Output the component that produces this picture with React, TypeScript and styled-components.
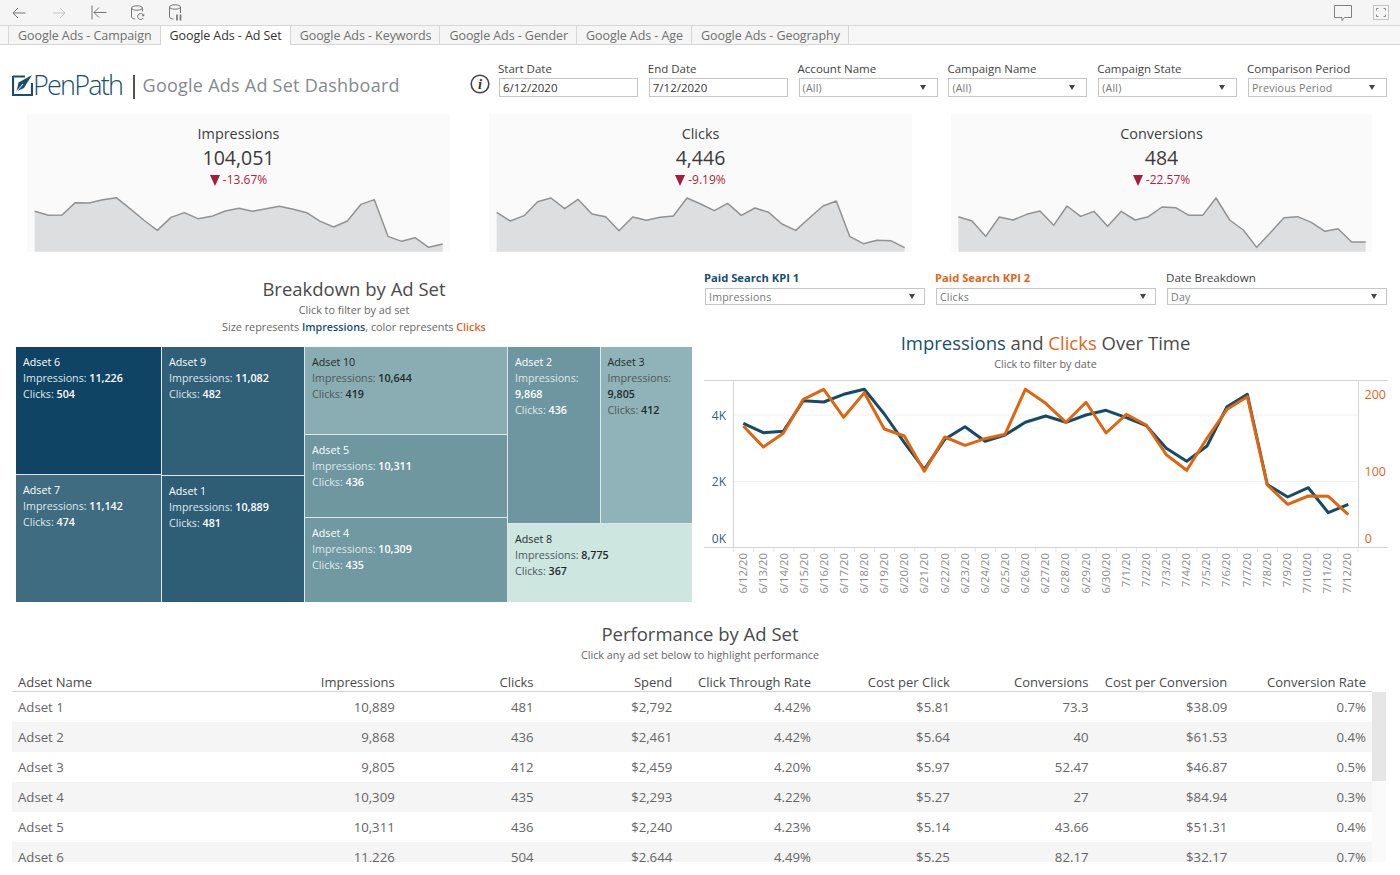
import React from "react";
import styled, { createGlobalStyle } from "styled-components";

const FONT = `"Open Sans", "Noto Sans", "Liberation Sans", sans-serif`;
const BLUE = "#17506f";
const ORANGE = "#e0651a";

const Global = createGlobalStyle`
  html, body { margin: 0; padding: 0; background: #fff; }
  body { font-family: ${FONT}; color: #444; }
  * { box-sizing: border-box; }
`;

const Page = styled.div`
  width: 1400px;
  height: 875px;
  overflow: hidden;
  background: #fff;
`;

/* ---------- toolbar ---------- */
const Toolbar = styled.div`
  height: 26px;
  background: #f5f5f5;
  border-bottom: 1px solid #d6d6d6;
  display: flex;
  align-items: center;
  padding: 0 11px 0 12px;
`;
const ToolIcon = styled.svg<{ $gap: number }>`
  display: block;
  margin-right: ${(p) => p.$gap}px;
  flex: none;
`;
const Spacer = styled.div`
  flex: 1;
`;

const TabBar = styled.div`
  height: 19px;
  background: #f7f7f7;
  border-bottom: 1px solid #d6d6d6;
  display: flex;
  padding-left: 8px;
`;
const Tab = styled.div<{ $active?: boolean }>`
  height: ${(p) => (p.$active ? 19 : 18)}px;
  line-height: 20px;
  padding: 0 8px 0 9px;
  font-size: 12.5px;
  letter-spacing: -0.07px;
  white-space: nowrap;
  color: ${(p) => (p.$active ? "#333" : "#6f6f6f")};
  background: ${(p) => (p.$active ? "#fff" : "#f5f5f5")};
  border-left: 1px solid #d6d6d6;
  &:last-child {
    border-right: 1px solid #d6d6d6;
  }
`;

/* ---------- header ---------- */
const Header = styled.div`
  height: 69px;
  display: flex;
  align-items: flex-start;
`;
const Brand = styled.div`
  width: 470px;
  padding: 24px 0 0 12px;
  display: flex;
  align-items: center;
  height: 56px;
  flex: none;
`;
const LogoSvg = styled.svg`
  flex: none;
  display: block;
`;
const LogoWord = styled.span`
  font-size: 27px;
  line-height: 30px;
  font-weight: 300;
  letter-spacing: -1.8px;
  color: ${BLUE};
`;
const Divider = styled.span`
  width: 1.5px;
  height: 24px;
  background: #555;
  margin: 3px 8px 0 11px;
`;
const DashTitle = styled.span`
  font-size: 18px;
  font-weight: 400;
  letter-spacing: 0.25px;
  color: #858a8d;
  white-space: nowrap;
`;
const InfoIcon = styled.svg`
  flex: none;
  margin-top: 29px;
  display: block;
`;
const Filters = styled.div`
  display: grid;
  grid-template-columns: repeat(6, 140px);
  column-gap: 9.8px;
  padding-top: 16px;
  margin-left: 8px;
`;
const FilterLabel = styled.div`
  font-size: 11.5px;
  line-height: 16px;
  color: #444;
  white-space: nowrap;
`;
const BoxBase = styled.div`
  height: 19px;
  border: 1px solid #c6c6c6;
  background: #fff;
  margin: 1px 0 0 1px;
  display: flex;
  align-items: center;
  justify-content: space-between;
  padding: 0 11px 0 3px;
  font-size: 10.6px;
  color: #777;
  letter-spacing: 0.2px;
`;
const DateBox = styled(BoxBase)`
  color: #333;
  letter-spacing: 0;
  font-size: 11.5px;
`;
const Arrow = styled.span`
  width: 0;
  height: 0;
  border-left: 3px solid transparent;
  border-right: 3px solid transparent;
  border-top: 5px solid #444;
  flex: none;
`;

/* ---------- KPI ---------- */
const KpiRow = styled.div`
  display: grid;
  grid-template-columns: 423px 423px 421px;
  column-gap: 39px;
  padding-left: 27px;
`;
const Kpi = styled.div`
  height: 138px;
  background: #fafafa;
  display: flex;
  flex-direction: column;
  align-items: center;
  padding-top: 11px;
`;
const KpiTitle = styled.div`
  font-size: 14.4px;
  line-height: 18px;
  color: #3d3d3d;
`;
const KpiValue = styled.div`
  font-size: 19.5px;
  line-height: 26px;
  margin-top: 2px;
  color: #3a3a3a;
`;
const KpiDelta = styled.div`
  font-size: 12px;
  line-height: 16px;
  margin-top: 1px;
  color: #b0233c;
  display: flex;
  align-items: center;
  gap: 3px;
`;
const DownTri = styled.span`
  width: 0;
  height: 0;
  border-left: 5px solid transparent;
  border-right: 5px solid transparent;
  border-top: 11px solid #a81e38;
`;
const Spark = styled.svg`
  display: block;
  margin-top: auto;
  flex: none;
  align-self: flex-start;
`;

/* ---------- middle ---------- */
const Middle = styled.div`
  display: flex;
  height: 350px;
`;
const LeftCol = styled.div`
  width: 676px;
  margin-left: 16px;
  padding-top: 24px;
  flex: none;
  display: flex;
  flex-direction: column;
  align-items: center;
`;
const SectionTitle = styled.div`
  font-size: 18.5px;
  line-height: 25px;
  color: #4a4a4a;
  white-space: nowrap;
`;
const Note = styled.div`
  font-size: 10.8px;
  line-height: 17px;
  color: #666;
  white-space: nowrap;
`;
const Em = styled.span<{ $c: string }>`
  color: ${(p) => p.$c};
  font-weight: 600;
`;
const Tint = styled.span<{ $c: string }>`
  color: ${(p) => p.$c};
`;
const Treemap = styled.div`
  width: 676px;
  height: 255px;
  margin-top: 12px;
  display: flex;
  gap: 1px;
  background: #dfe7e9;
`;
const TreeCol = styled.div<{ $w: number }>`
  width: ${(p) => p.$w}px;
  flex: none;
  display: flex;
  flex-direction: column;
  gap: 1px;
`;
const TreeRow = styled.div<{ $h: number }>`
  height: ${(p) => p.$h}px;
  flex: none;
  display: flex;
  gap: 1px;
`;
const Cell = styled.div<{ $bg: string; $dark?: boolean; $h?: number }>`
  flex: ${(p) => (p.$h ? `0 0 ${p.$h}px` : "1 1 0")};
  min-width: 0;
  background: ${(p) => p.$bg};
  padding: 7px 7px 0;
  font-size: 10.7px;
  line-height: 16px;
  color: ${(p) => (p.$dark ? "#4c5b5d" : "#dfe8ea")};
`;
const CellName = styled.div<{ $dark?: boolean }>`
  font-weight: 500;
  color: ${(p) => (p.$dark ? "#1e2a2c" : "#fff")};
`;
const CellVal = styled.b<{ $dark?: boolean }>`
  font-weight: 600;
  color: ${(p) => (p.$dark ? "#1e2a2c" : "#fff")};
`;

const RightCol = styled.div`
  width: 700px;
  margin-left: 8px;
  flex: none;
  display: flex;
  flex-direction: column;
  align-items: center;
`;
const ControlRow = styled.div`
  width: 100%;
  display: grid;
  grid-template-columns: 221px 221px 221px;
  column-gap: 10px;
  padding: 18px 0 0 4px;
`;
const ControlLabel = styled.div<{ $c?: string }>`
  font-size: ${(p) => (p.$c ? 11.2 : 11.6)}px;
  line-height: 16px;
  font-weight: ${(p) => (p.$c ? 700 : 400)};
  color: ${(p) => p.$c || "#444"};
`;
const ControlBox = styled(BoxBase)`
  height: 17px;
  margin-top: 2px;
  padding-right: 9px;
`;
const ChartTitle = styled(SectionTitle)`
  margin-top: 25px;
  padding-right: 9px;
`;
const ChartNote = styled(Note)`
  padding-right: 9px;
`;
const ChartSvg = styled.svg`
  display: block;
  margin-top: 6px;
  flex: none;
`;

/* ---------- table ---------- */
const Bottom = styled.div`
  padding-top: 19px;
  display: flex;
  flex-direction: column;
  align-items: center;
`;
const TableWrap = styled.div`
  align-self: flex-start;
  margin-left: 12px;
  margin-top: 9px;
  width: 1374px;
`;
const Grid = styled.div`
  display: grid;
  grid-template-columns: 250px repeat(8, 138.75px);
  width: 1360px;
`;
const HeadRow = styled(Grid)`
  height: 20px;
  border-bottom: 1px solid #d4d4d4;
  align-items: center;
  font-size: 13px;
  color: #4a4a4a;
`;
const Cellish = styled.div<{ $left?: boolean }>`
  text-align: ${(p) => (p.$left ? "left" : "right")};
  padding: ${(p) => (p.$left ? "0 0 0 6px" : "0 6px 0 0")};
  white-space: nowrap;
`;
const TableBody = styled.div`
  height: 170px;
  display: flex;
  overflow: hidden;
`;
const Rows = styled.div`
  width: 1360px;
  flex: none;
`;
const Row = styled(Grid)<{ $alt: boolean }>`
  height: 30px;
  align-items: center;
  font-size: 13.2px;
  color: #666;
  background: ${(p) => (p.$alt ? "#f5f5f5" : "#fff")};
`;
const Track = styled.div`
  width: 14px;
  background: #fafafa;
  flex: none;
`;
const Thumb = styled.div`
  height: 89px;
  background: #e6e6e6;
`;

/* ---------- data ---------- */
const sp1: [number, number][] = [[104,306],[145,318],[186,317],[226,280],[267,281],[308,271],[349,265],[390,298],[431,332],[472,363],[513,324],[553,310],[594,328],[635,321],[676,305],[717,297],[757,306],[798,298],[838,291],[880,300],[920,310],[961,336],[1001,353],[1042,335],[1083,285],[1123,271],[1164,381],[1205,396],[1245,385],[1286,414],[1328,404]];
const sp2: [number, number][] = [[50,309],[91,335],[132,319],[173,277],[213,266],[254,298],[294,270],[336,314],[377,322],[417,364],[458,323],[499,333],[540,324],[580,320],[621,266],[662,284],[703,304],[743,282],[784,318],[825,296],[866,309],[906,344],[947,363],[988,326],[1029,290],[1069,275],[1109,381],[1150,403],[1191,393],[1232,394],[1274,415]];
const sp3: [number, number][] = [[55,322],[96,335],[137,381],[178,323],[219,332],[260,315],[300,305],[341,348],[381,290],[422,321],[462,306],[503,351],[544,306],[585,332],[625,322],[666,293],[707,295],[747,318],[788,318],[828,266],[869,332],[910,362],[950,414],[991,370],[1032,325],[1073,322],[1114,339],[1155,366],[1194,358],[1235,398],[1277,398]];

const kpis = [
  { title: "Impressions", value: "104,051", delta: "-13.67%", pts: sp1, x0: 81 },
  { title: "Clicks", value: "4,446", delta: "-9.19%", pts: sp2, x0: 27 },
  { title: "Conversions", value: "484", delta: "-22.57%", pts: sp3, x0: 33 },
];

const blueZ: [number, number][] = [[130,160],[190,188],[250,184],[310,92],[371,96],[431,73],[493,58],[553,132],[613,218],[673,298],[734,208],[795,170],[855,214],[915,195],[976,157],[1037,138],[1098,157],[1158,135],[1218,121],[1279,143],[1339,167],[1399,235],[1460,274],[1521,228],[1581,110],[1642,73],[1702,344],[1763,381],[1825,353],[1885,428],[1945,403]];
const orangeZ: [number, number][] = [[130,168],[190,231],[250,190],[310,88],[371,58],[431,142],[493,68],[553,177],[613,198],[673,304],[734,201],[795,226],[855,206],[915,193],[976,58],[1037,100],[1098,157],[1158,97],[1218,189],[1279,133],[1339,165],[1399,254],[1460,301],[1521,205],[1581,118],[1642,80],[1702,345],[1763,403],[1825,378],[1885,379],[1945,434]];
const dates = ["6/12/20","6/13/20","6/14/20","6/15/20","6/16/20","6/17/20","6/18/20","6/19/20","6/20/20","6/21/20","6/22/20","6/23/20","6/24/20","6/25/20","6/26/20","6/27/20","6/28/20","6/29/20","6/30/20","7/1/20","7/2/20","7/3/20","7/4/20","7/5/20","7/6/20","7/7/20","7/8/20","7/9/20","7/10/20","7/11/20","7/12/20"];
const zx = (x: number) => x / 3;
const zy = (y: number) => y / 3 + 370 - 378;
const poly = (a: [number, number][]) => a.map(([x, y]) => `${zx(x).toFixed(1)},${zy(y).toFixed(1)}`).join(" ");

const cols = ["Impressions","Clicks","Spend","Click Through Rate","Cost per Click","Conversions","Cost per Conversion","Conversion Rate"];
const rows = [
  ["Adset 1","10,889","481","$2,792","4.42%","$5.81","73.3","$38.09","0.7%"],
  ["Adset 2","9,868","436","$2,461","4.42%","$5.64","40","$61.53","0.4%"],
  ["Adset 3","9,805","412","$2,459","4.20%","$5.97","52.47","$46.87","0.5%"],
  ["Adset 4","10,309","435","$2,293","4.22%","$5.27","27","$84.94","0.3%"],
  ["Adset 5","10,311","436","$2,240","4.23%","$5.14","43.66","$51.31","0.4%"],
  ["Adset 6","11,226","504","$2,644","4.49%","$5.25","82.17","$32.17","0.7%"],
];

const TreeCell = ({ name, imp, clicks, bg, dark, h }: { name: string; imp: string; clicks: string; bg: string; dark?: boolean; h?: number }) => (
  <Cell $bg={bg} $dark={dark} $h={h}>
    <CellName $dark={dark}>{name}</CellName>
    <div>Impressions: <CellVal $dark={dark}>{imp}</CellVal></div>
    <div>Clicks: <CellVal $dark={dark}>{clicks}</CellVal></div>
  </Cell>
);

const Select = ({ text }: { text: string }) => (
  <BoxBase>
    <span>{text}</span>
    <Arrow />
  </BoxBase>
);

export default function App() {
  return (
    <Page>
      <Global />
      <Toolbar>
        <ToolIcon $gap={27} width="14" height="14" viewBox="0 0 14 14" fill="none" stroke="#777" strokeWidth="1">
          <path d="M13.5 7H1M6 2L1 7l5 5" />
        </ToolIcon>
        <ToolIcon $gap={25} width="13" height="14" viewBox="0 0 13 14" fill="none" stroke="#c4c4c4" strokeWidth="1">
          <path d="M0 7h12M7 2l5 5-5 5" />
        </ToolIcon>
        <ToolIcon $gap={24} width="16" height="15" viewBox="0 0 16 15" fill="none" stroke="#777" strokeWidth="1">
          <path d="M1 0.5v14M15.500 7.500H3M8 2.500l-5 5 5 5" />
        </ToolIcon>
        <ToolIcon $gap={24} width="14" height="16" viewBox="0 0 14 16" fill="none" stroke="#777" strokeWidth="1">
          <ellipse cx="6" cy="3" rx="5.500" ry="2.200" />
          <path d="M.5 3v9c0 1 1.500 1.800 3.500 2M11.500 3v3.500" />
          <path d="M12.500 10.500a3 3 0 1 0-.2 2.500M12.800 8.800v2h-2" />
        </ToolIcon>
        <ToolIcon $gap={0} width="13" height="17" viewBox="0 0 13 17" fill="none" stroke="#777" strokeWidth="1">
          <ellipse cx="6" cy="3" rx="5.500" ry="2.200" />
          <path d="M.5 3v10c0 1.200 1.800 2 4 2M11.500 3v6" />
          <path d="M8 10.500v6M11.500 10.500v6" strokeWidth="1.700" />
        </ToolIcon>
        <Spacer />
        <ToolIcon $gap={21} width="18" height="16" viewBox="0 0 18 16" fill="none" stroke="#808080" strokeWidth="1">
          <path d="M.5.500h17v12H10.500L8 15.500v-3H.5z" />
        </ToolIcon>
        <ToolIcon $gap={0} width="16" height="15" viewBox="0 0 16 15" fill="none" stroke="#8a8a8a" strokeWidth="1">
          <rect x=".5" y=".5" width="15" height="14" stroke="#c4c4c4" />
          <path d="M3.500 5.500v-2h2M10.500 3.500h2v2M3.500 9.500v2h2M12.500 9.500v2h-2" />
        </ToolIcon>
      </Toolbar>
      <TabBar>
        <Tab>Google Ads - Campaign</Tab>
        <Tab $active>Google Ads - Ad Set</Tab>
        <Tab>Google Ads - Keywords</Tab>
        <Tab>Google Ads - Gender</Tab>
        <Tab>Google Ads - Age</Tab>
        <Tab>Google Ads - Geography</Tab>
      </TabBar>

      <Header>
        <Brand>
          <LogoSvg width="21" height="21" viewBox="0 0 21 21">
            <path d="M1 1.500H13M1 1v19h19V8" fill="none" stroke={BLUE} strokeWidth="2.200" />
            <path d="M20 0L6.500 7.500 4.500 16.500 12 13z" fill={BLUE} />
            <path d="M5 16L11 9" stroke="#fff" strokeWidth="1" />
          </LogoSvg>
          <LogoWord>PenPath</LogoWord>
          <Divider />
          <DashTitle>Google Ads Ad Set Dashboard</DashTitle>
        </Brand>
        <InfoIcon width="20" height="20" viewBox="0 0 20 20" fill="none">
          <circle cx="10" cy="10" r="8.800" stroke="#444" strokeWidth="1.600" />
          <text x="10" y="15" textAnchor="middle" fontSize="14.500" fontWeight="700" fontFamily="Liberation Serif, serif" fontStyle="italic" fill="#333">i</text>
        </InfoIcon>
        <Filters>
          <div><FilterLabel>Start Date</FilterLabel><DateBox>6/12/2020</DateBox></div>
          <div><FilterLabel>End Date</FilterLabel><DateBox>7/12/2020</DateBox></div>
          <div><FilterLabel>Account Name</FilterLabel><Select text="(All)" /></div>
          <div><FilterLabel>Campaign Name</FilterLabel><Select text="(All)" /></div>
          <div><FilterLabel>Campaign State</FilterLabel><Select text="(All)" /></div>
          <div><FilterLabel>Comparison Period</FilterLabel><Select text="Previous Period" /></div>
        </Filters>
      </Header>

      <KpiRow>
        {kpis.map((k) => (
          <Kpi key={k.title}>
            <KpiTitle>{k.title}</KpiTitle>
            <KpiValue>{k.value}</KpiValue>
            <KpiDelta><DownTri />{k.delta}</KpiDelta>
            <Spark width="423" height="62" viewBox={`${k.x0} 242 1269 186`}>
              <polygon points={`${k.pts[0][0]},427 ${k.pts.map((p) => p.join(",")).join(" ")} ${k.pts[30][0]},427`} fill="#dcdee0" />
              <polyline points={k.pts.map((p) => p.join(",")).join(" ")} fill="none" stroke="#929292" strokeWidth="4.500" strokeLinejoin="round" />
            </Spark>
          </Kpi>
        ))}
      </KpiRow>

      <Middle>
        <LeftCol>
          <SectionTitle>Breakdown by Ad Set</SectionTitle>
          <Note>Click to filter by ad set</Note>
          <Note>Size represents <Em $c={BLUE}>Impressions</Em>, color represents <Em $c={ORANGE}>Clicks</Em></Note>
          <Treemap>
            <TreeCol $w={145}>
              <TreeCell name="Adset 6" imp="11,226" clicks="504" bg="#0f4464" h={127} />
              <TreeCell name="Adset 7" imp="11,142" clicks="474" bg="#3f6c80" />
            </TreeCol>
            <TreeCol $w={142}>
              <TreeCell name="Adset 9" imp="11,082" clicks="482" bg="#305f78" h={128} />
              <TreeCell name="Adset 1" imp="10,889" clicks="481" bg="#2e5d76" />
            </TreeCol>
            <TreeCol $w={202}>
              <TreeCell name="Adset 10" imp="10,644" clicks="419" bg="#89adb3" dark h={87} />
              <TreeCell name="Adset 5" imp="10,311" clicks="436" bg="#6e97a0" h={82} />
              <TreeCell name="Adset 4" imp="10,309" clicks="435" bg="#7099a2" />
            </TreeCol>
            <TreeCol $w={184}>
              <TreeRow $h={176}>
                <TreeCell name="Adset 2" imp="9,868" clicks="436" bg="#6d96a0" />
                <TreeCell name="Adset 3" imp="9,805" clicks="412" bg="#8fb3b8" dark />
              </TreeRow>
              <TreeCell name="Adset 8" imp="8,775" clicks="367" bg="#cde6e0" dark />
            </TreeCol>
          </Treemap>
        </LeftCol>

        <RightCol>
          <ControlRow>
            <div><ControlLabel $c={BLUE}>Paid Search KPI 1</ControlLabel><ControlBox><span>Impressions</span><Arrow /></ControlBox></div>
            <div><ControlLabel $c={ORANGE}>Paid Search KPI 2</ControlLabel><ControlBox><span>Clicks</span><Arrow /></ControlBox></div>
            <div><ControlLabel>Date Breakdown</ControlLabel><ControlBox><span>Day</span><Arrow /></ControlBox></div>
          </ControlRow>
          <ChartTitle>
            <Tint $c={BLUE}>Impressions</Tint> and <Tint $c={ORANGE}>Clicks</Tint> Over Time
          </ChartTitle>
          <ChartNote>Click to filter by date</ChartNote>
          <ChartSvg width="700" height="224" viewBox="0 0 700 224" fontFamily={FONT}>
            <line x1="4" x2="688" y1="2.500" y2="2.500" stroke="#d4d4d4" />
            <line x1="33" x2="658" y1="37" y2="37" stroke="#f0f0f0" />
            <line x1="33" x2="658" y1="103.500" y2="103.500" stroke="#f0f0f0" />
            <line x1="4" x2="688" y1="169.500" y2="169.500" stroke="#d4d4d4" />
            <line x1="33.500" x2="33.500" y1="2" y2="170" stroke="#d4d4d4" />
            <line x1="658.500" x2="658.500" y1="2" y2="170" stroke="#d4d4d4" />
            {Array.from({ length: 32 }, (_, i) => (
              <line key={i} x1={33.5 + i * 20.15} x2={33.5 + i * 20.15} y1="170" y2="174" stroke="#e4e4e4" />
            ))}
            <polyline points={poly(blueZ)} fill="none" stroke="#154a68" strokeWidth="3" strokeLinejoin="round" />
            <polyline points={poly(orangeZ)} fill="none" stroke="#e0650f" strokeWidth="3" strokeLinejoin="round" />
            <g fontSize="12" fill="#2f607a" textAnchor="end">
              <text x="26" y="42">4K</text>
              <text x="26" y="108">2K</text>
              <text x="26" y="165">0K</text>
            </g>
            <g fontSize="12.500" fill="#e0651a" textAnchor="end">
              <text x="686" y="21">200</text>
              <text x="686" y="98">100</text>
              <text x="672" y="165">0</text>
            </g>
            <g fontSize="11.300" fill="#8c8c8c" textAnchor="end">
              {dates.map((d, i) => {
                const x = 43.3 + i * 20.13;
                return <text key={d} transform={`translate(${x + 4} 175) rotate(-90)`}>{d}</text>;
              })}
            </g>
          </ChartSvg>
        </RightCol>
      </Middle>

      <Bottom>
        <SectionTitle>Performance by Ad Set</SectionTitle>
        <Note>Click any ad set below to highlight performance</Note>
        <TableWrap>
          <HeadRow>
            <Cellish $left>Adset Name</Cellish>
            {cols.map((c) => <Cellish key={c}>{c}</Cellish>)}
          </HeadRow>
          <TableBody>
            <Rows>
              {rows.map((r, i) => (
                <Row key={r[0]} $alt={i % 2 === 1}>
                  {r.map((v, j) => <Cellish key={j} $left={j === 0}>{v}</Cellish>)}
                </Row>
              ))}
            </Rows>
            <Track><Thumb /></Track>
          </TableBody>
        </TableWrap>
      </Bottom>
    </Page>
  );
}
